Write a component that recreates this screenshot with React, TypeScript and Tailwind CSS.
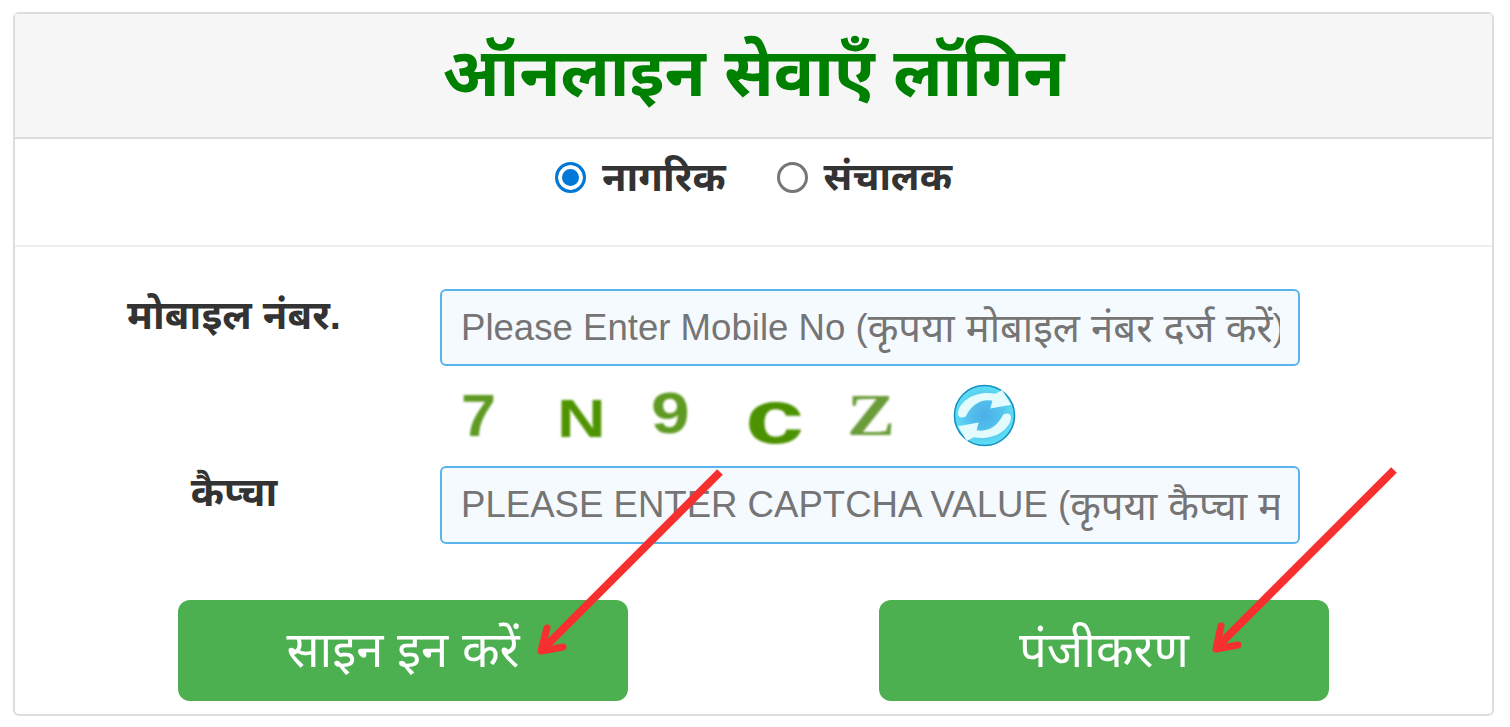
import { useState } from 'react';

const RefreshIcon = () => (
  <svg viewBox="0 0 64 64" className="w-[63px] h-[63px] shrink-0 -translate-y-[1px]">
    <defs>
      <radialGradient id="refreshFill" cx="50%" cy="50%" r="50%">
        <stop offset="0%" stopColor="#4aaee8" />
        <stop offset="60%" stopColor="#55c4ee" />
        <stop offset="100%" stopColor="#5fe0f5" />
      </radialGradient>
    </defs>
    <circle cx="32" cy="32" r="30.5" fill="url(#refreshFill)" stroke="#1590c4" strokeWidth="1.6" />
    <path d="M5 30C6 17 24 6 43 10L50 6L59 21L38 25L40 17C28 15 19 21 13 33C9 35 5 34 5 30Z" fill="#e4fbfd" />
    <path d="M59 34C58 47 40 58 21 54L14 58L5 43L26 39L24 47C36 49 45 43 51 31C55 29 59 30 59 34Z" fill="#e4fbfd" />
  </svg>
);

const Arrow = ({ line, head }: { line: string; head: string }) => (
  <>
    <path d={line} stroke="#f7302f" strokeWidth="8" fill="none" />
    <path d={head} stroke="#f7302f" strokeWidth="7" fill="none" strokeLinejoin="round" strokeLinecap="round" />
  </>
);

const CaptchaChar = ({ char, className }: { char: string; className: string }) => (
  <span className={`inline-block origin-left font-bold leading-none blur-[0.8px] ${className}`}>{char}</span>
);

// placeholder sits over the input since latin and hindi need different sizes
const Field = ({ latin, hindi, height }: { latin: string; hindi: string; height: string }) => {
  const [value, setValue] = useState('');
  return (
    <div className={`relative w-[860px] ${height}`}>
      <input
        value={value}
        onChange={(e) => setValue(e.target.value)}
        className="w-full h-full border-2 border-[#5ab4ec] rounded-[6px] bg-[#f5faff] px-[20px] text-[36px]"
      />
      {!value && (
        <div className="absolute left-[21px] right-[20px] inset-y-0 pt-[1px] flex items-center overflow-hidden whitespace-pre text-[#757575] pointer-events-none">
          <span className="text-[36.6px]">{latin} (</span>
          <span className="text-[40px]">{hindi}</span>
          <span className="text-[36.6px]">)</span>
        </div>
      )}
    </div>
  );
};

const Radio = ({ label, size, checked, onChange }: { label: string; size: string; checked: boolean; onChange: () => void }) => (
  <label className={`flex items-center gap-[16px] h-[48px] ${size}`}>
    <input
      type="radio"
      name="role"
      checked={checked}
      onChange={onChange}
      className="appearance-none w-[31px] h-[31px] m-0 rounded-full border-[3px] border-[#767676] checked:border-[#0078d7] checked:bg-[#0078d7] checked:shadow-[inset_0_0_0_4px_white]"
    />
    {label}
  </label>
);

export default function App() {
  const [role, setRole] = useState('citizen');

  return (
    <div className="relative w-[1510px] h-[727px] bg-white overflow-hidden pt-[12px] pl-[13px]">
      <div className="w-[1481px] h-[704px] border-2 border-[#dddddd] rounded-[6px] font-['Liberation_Sans','Noto_Sans','DejaVu_Sans',sans-serif]">
        <div className="h-[125px] pb-[6px] bg-[#f6f6f6] border-b-2 border-[#dddddd] flex items-center justify-center">
          <h1 className="text-[67px] font-bold text-[#008000] leading-none">ऑनलाइन सेवाएँ लॉगिन</h1>
        </div>

        <div className="h-[108px] border-b-2 border-[#eeeeee] flex justify-center gap-[51px] pt-[14px] font-bold text-[#333333]">
          <Radio label="नागरिक" size="text-[40px]" checked={role === 'citizen'} onChange={() => setRole('citizen')} />
          <Radio label="संचालक" size="text-[39px]" checked={role === 'operator'} onChange={() => setRole('operator')} />
        </div>

        <div className="flex pt-[42px]">
          <div className="w-[425px] pl-[13px] text-center text-[40px] font-bold text-[#333333] leading-[52px] shrink-0">
            मोबाइल नंबर.
          </div>
          <Field latin="Please Enter Mobile No" hindi="कृपया मोबाइल नंबर दर्ज करें" height="h-[77px]" />
        </div>

        <div className="flex items-center h-[100px] pl-[446px]">
          <div className="flex items-center w-[492px] shrink-0">
            <CaptchaChar char="7" className="w-[96px] text-[60px] scale-x-[1.05] text-[#5f9a22]" />
            <CaptchaChar char="N" className="w-[94px] text-[54px] scale-x-[1.25] translate-y-[2px] text-[#4f9400]" />
            <CaptchaChar char="9" className="w-[94px] text-[58px] scale-x-[1.2] -translate-y-[3px] text-[#5f9a22]" />
            <CaptchaChar char="c" className="w-[102px] text-[76px] scale-x-[1.4] translate-y-[1px] text-[#4c9200]" />
            <CaptchaChar char="Z" className="w-[60px] text-[60px] scale-x-[1.2] -translate-y-[1px] text-[#6a9c3a] font-['Liberation_Serif',serif]" />
          </div>
          <RefreshIcon />
        </div>

        <div className="flex">
          <div className="w-[425px] pl-[13px] text-center text-[40px] font-bold text-[#333333] leading-[52px] shrink-0">
            कैप्चा
          </div>
          <Field latin="PLEASE ENTER CAPTCHA VALUE" hindi="कृपया कैप्चा मान दर्ज करें" height="h-[78px]" />
        </div>

        <div className="flex pt-[56px] pl-[163px] gap-[251px]">
          <button className="w-[450px] h-[101px] bg-[#4caf50] rounded-[12px] text-white text-[49px]">साइन इन करें</button>
          <button className="w-[450px] h-[101px] bg-[#4caf50] rounded-[12px] text-white text-[49px]">पंजीकरण</button>
        </div>
      </div>

      <svg className="absolute left-0 top-0 w-[1510px] h-[727px] pointer-events-none" viewBox="0 0 1510 727">
        <Arrow line="M720 472L544 648" head="M547 628L541 651L563 647" />
        <Arrow line="M1394 470L1218 646" head="M1221 626L1216 649L1238 645" />
      </svg>
    </div>
  );
}
